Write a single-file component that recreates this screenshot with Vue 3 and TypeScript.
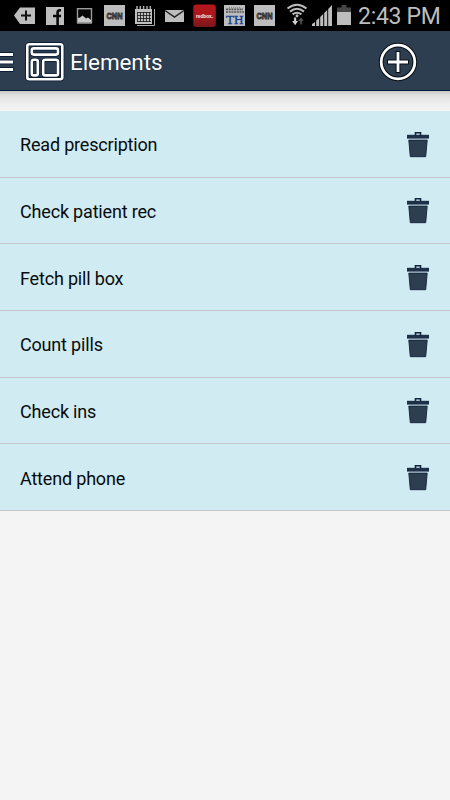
<script setup lang="ts">
import { ref } from 'vue'

interface ElementItem {
  id: number
  label: string
}

const items = ref<ElementItem[]>([
  { id: 1, label: 'Read prescription' },
  { id: 2, label: 'Check patient rec' },
  { id: 3, label: 'Fetch pill box' },
  { id: 4, label: 'Count pills' },
  { id: 5, label: 'Check ins' },
  { id: 6, label: 'Attend phone' },
])

function remove(id: number) {
  items.value = items.value.filter((item) => item.id !== id)
}
</script>

<template>
  <div class="screen">
    <div class="status">
      <svg class="note" viewBox="0 0 30 31">
        <path d="M4 15.5L10 7.5H25V24H10Z" fill="#bdbdbd" />
        <path d="M16 10.5V20.5M11 15.5H21" stroke="#111" stroke-width="2" />
      </svg>
      <svg class="note" viewBox="0 0 30 31">
        <rect x="6" y="7" width="18" height="18" fill="#bdbdbd" />
        <path d="M21 10.2H19.8Q17.6 10.2 17.6 12.5V25M13 16H21" fill="none" stroke="#080808" stroke-width="2.6" />
      </svg>
      <svg class="note" viewBox="0 0 30 31">
        <rect x="7.5" y="8.7" width="14" height="13.6" fill="#050505" stroke="#9b9b9b" stroke-width="1.4" />
        <path d="M8 22V18L10 17.5L12.5 15.5L16 18.5L18 17.5L21 20V22Z" fill="#c8c8c8" />
        <path d="M7 23.5H22" stroke="#777" />
      </svg>
      <svg class="note" viewBox="0 0 30 31">
        <rect x="4" y="5" width="21" height="21" fill="#bdbdbd" />
        <text x="14.5" y="19" text-anchor="middle" textLength="16" lengthAdjust="spacingAndGlyphs" class="cnn">CNN</text>
      </svg>
      <svg class="note" viewBox="0 0 30 31">
        <path d="M7 25.5H24.5V9" fill="none" stroke="#aaa" />
        <rect x="5" y="9" width="17" height="15" fill="#c0c0c0" />
        <path d="M7 6V9M10.3 6V9M13.6 6V9M17 6V9M20.3 6V9" stroke="#aaa" stroke-width="1.5" />
        <path d="M7 12.5H21M7 15.5H21M7 18.5H21M7 21.5H21M7.5 12V22M10.5 12V22M13.5 12V22M16.5 12V22M19.5 12V22" stroke="#222" stroke-width=".9" />
      </svg>
      <svg class="note" viewBox="0 0 30 31">
        <rect x="5" y="10" width="19" height="12" fill="#bdbdbd" />
        <path d="M5 10.5L14.5 17L24 10.5" fill="none" stroke="#222" stroke-width="1.5" />
      </svg>
      <svg class="note" viewBox="0 0 30 31">
        <defs>
          <linearGradient id="redGlow" x1="0" y1="0" x2="0" y2="1">
            <stop offset="0" stop-color="#b5171c" />
            <stop offset=".5" stop-color="#aa171b" />
            <stop offset="1" stop-color="#78171b" />
          </linearGradient>
        </defs>
        <rect x="3.3" y="4.5" width="22.5" height="22.5" rx="3" fill="url(#redGlow)" />
        <text x="14.5" y="17.5" text-anchor="middle" textLength="17" lengthAdjust="spacingAndGlyphs" class="redbox">redbox.</text>
      </svg>
      <svg class="note" viewBox="0 0 30 31">
        <rect x="4" y="5" width="21" height="21" fill="#bdbdbd" />
        <path d="M6 9.4H23M6 12H24" stroke="#555" stroke-width="1.6" stroke-dasharray="2 .7" />
        <path d="M9 7.5H21" stroke="#888" stroke-dasharray="1 1" />
        <text x="14.7" y="24" text-anchor="middle" textLength="17.5" lengthAdjust="spacingAndGlyphs" class="th">TH</text>
      </svg>
      <svg class="note" viewBox="0 0 30 31">
        <rect x="4" y="5" width="21" height="21" fill="#bdbdbd" />
        <text x="14.5" y="19" text-anchor="middle" textLength="16" lengthAdjust="spacingAndGlyphs" class="cnn">CNN</text>
      </svg>
      <svg class="system" viewBox="280 0 76 31">
        <g fill="none" stroke="#bdbdbd" stroke-width="2">
          <path d="M287.5 8.5Q297 1 306.5 8.5M290 11.6Q297 6 304 11.6M292.6 14.4Q297 11 301.4 14.4" />
        </g>
        <circle cx="297" cy="15.8" r="1.5" fill="#bdbdbd" />
        <path d="M292.2 21H294.1V17.5H296.2V21H298L295.1 25.2Z" fill="#d0d0d0" />
        <path d="M298.2 21L301 17.5L303.8 21H301.8V24.5H300.2V21Z" fill="#555" />
        <path d="M312 26V24L315 22V26ZM316.2 26V20.5L319.2 18V26ZM320.2 26V17L323.2 14V26ZM324.2 26V13L327.2 10V26ZM328.2 26V9L332 5V26Z" fill="#bdbdbd" />
        <path d="M341.5 5H346.5V7.5H351V12H337V7.5H341.5Z" fill="#454545" />
        <rect x="337" y="12" width="14" height="13" fill="#bdbdbd" />
      </svg>
      <span class="clock">2:43 PM</span>
    </div>

    <header class="bar">
      <svg class="menu" viewBox="0 0 14 22">
        <path d="M0 3.5H13.4M0 11H13.4M0 18.5H13.4" stroke="#02132e" stroke-width="4.4" />
        <path d="M0 3.5H13M0 11H13M0 18.5H13" stroke="#fff" stroke-width="3" />
      </svg>
      <svg class="logo" viewBox="0 0 40 40">
        <g fill="none" stroke="#03152f" stroke-width="4">
          <rect x="2.3" y="2.3" width="35" height="35" rx="2" />
          <rect x="6.8" y="6.4" width="26.2" height="6.2" rx="2" />
          <rect x="6.8" y="17.8" width="6" height="15.6" rx="2" />
          <rect x="18.2" y="17.8" width="14.8" height="15.6" rx="2" />
        </g>
        <g fill="none" stroke="#fff" stroke-width="2.6">
          <rect x="2.3" y="2.3" width="35" height="35" rx="2" />
          <rect x="6.8" y="6.4" width="26.2" height="6.2" rx="2" />
          <rect x="6.8" y="17.8" width="6" height="15.6" rx="2" />
          <rect x="18.2" y="17.8" width="14.8" height="15.6" rx="2" />
        </g>
      </svg>
      <h1 class="title">Elements</h1>
      <button class="add" aria-label="Add">
        <svg viewBox="0 0 40 40">
          <g fill="none" stroke="#080d14" stroke-width="4.8">
            <circle cx="20" cy="20" r="16.8" />
            <path d="M20 9V31M9 20H31" />
          </g>
          <g fill="none" stroke="#fff" stroke-width="2.8">
            <circle cx="20" cy="20" r="16.8" />
            <path d="M20 10V30M10 20H30" />
          </g>
        </svg>
      </button>
    </header>

    <div class="shade"></div>

    <ul class="list">
      <li v-for="item in items" :key="item.id" class="row">
        <span class="label">{{ item.label }}</span>
        <button class="trash" aria-label="Delete" @click="remove(item.id)">
          <svg viewBox="0 0 24 28">
            <path d="M9.5 4.5V1.7H14.5V4.5" fill="none" stroke="#12243c" stroke-width="1.6" />
            <rect x="1" y="3.8" width="22" height="3.8" fill="#1d3047" />
            <path d="M2.8 9.1H21.2L19.7 25.7H4.3Z" fill="#2d3e50" stroke="#10233c" stroke-width=".9" />
          </svg>
        </button>
      </li>
    </ul>
  </div>
</template>

<style>
body {
  margin: 0;
  background: #f4f4f4;
}
</style>

<style scoped>
.screen {
  width: 450px;
  height: 800px;
  overflow: hidden;
  background: #f4f4f4;
  font-family: Roboto, "Liberation Sans", sans-serif;
}

svg {
  display: block;
}

button {
  padding: 0;
  border: 0;
  background: none;
}

.status {
  display: flex;
  height: 31px;
  padding-left: 10px;
  box-sizing: border-box;
  background: #000;
}

.note {
  flex: none;
  width: 30px;
  height: 31px;
}

.system {
  flex: none;
  width: 76px;
  height: 31px;
}

.clock {
  margin-left: 2px;
  font-size: 23px;
  line-height: 33px;
  letter-spacing: -0.3px;
  color: #bdbdbd;
  white-space: nowrap;
}

.cnn {
  font: bold 9px "Liberation Sans", sans-serif;
  fill: #999;
  stroke: #222;
  stroke-width: 0.8px;
}

.redbox {
  font: bold 6px "Liberation Sans", sans-serif;
  fill: #f0dada;
  stroke: #e6caca;
  stroke-width: 0.2px;
}

.th {
  font: 12.5px "Liberation Serif", serif;
  fill: #123c94;
  stroke: #123c94;
  stroke-width: 0.3px;
}

.bar {
  display: flex;
  align-items: center;
  height: 60px;
  box-sizing: border-box;
  border-bottom: 1px solid #001b3b;
  background: #2d3e50;
}

.menu {
  width: 14px;
  height: 22px;
  margin-top: 3px;
}

.logo {
  width: 40px;
  height: 40px;
  margin: 2px 0 0 11px;
}

.title {
  margin: 4px 0 0 5px;
  font-size: 22.5px;
  font-weight: 400;
  line-height: 31px;
  letter-spacing: -0.1px;
  color: #fff;
  text-shadow: 0 0 1px #02132e;
}

.add {
  width: 40px;
  height: 40px;
  margin: 2px 32px 0 auto;
}

.shade {
  height: 20px;
  background: linear-gradient(#c8c8c8, #e2e2e2 25%, #efefef 65%, #f4f4f4);
}

.list {
  margin: 0;
  padding: 0;
  list-style: none;
}

.row {
  display: flex;
  align-items: center;
  justify-content: space-between;
  height: 66.67px;
  padding: 0 20px;
  box-sizing: border-box;
  border-bottom: 1px solid #c5c7ca;
  background: #d1ebf2;
}

.label {
  margin-top: 3px;
  font-size: 18px;
  line-height: 24px;
  letter-spacing: -0.18px;
  color: #080b0d;
}

.trash {
  width: 24px;
  height: 28px;
  margin-top: 2px;
}
</style>
